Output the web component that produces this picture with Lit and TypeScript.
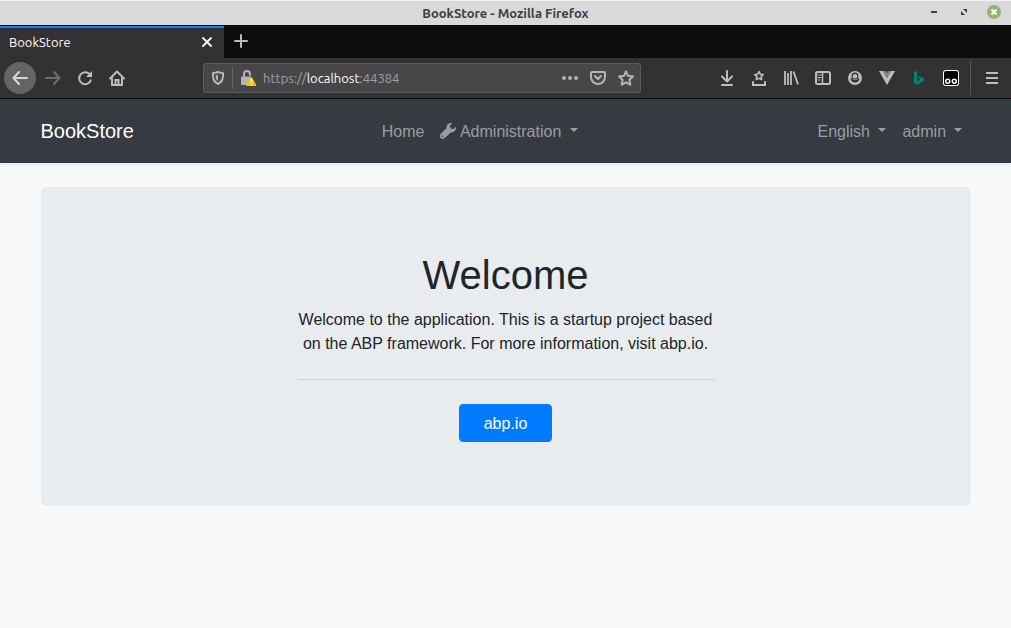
import { LitElement, html, css, svg } from "lit";
import { customElement } from "lit/decorators.js";

const icon = (body: unknown, size = 16) => html`<svg class="icon" width=${size} height=${size} viewBox="0 0 ${size} ${size}" fill="none" stroke="currentColor" stroke-width="2" stroke-linecap="round" stroke-linejoin="round" aria-hidden="true">${body}</svg>`;

const icons = {
  minimize: svg`<path d="M5 8h6" stroke-linecap="butt"/>`,
  restore: svg`<path d="M7 5h4v4zM5 7v4h4z" fill="currentColor" stroke="none"/>`,
  close: svg`<path d="M4 4l8 8M12 4l-8 8" stroke-width="1.800"/>`,
  closeWindow: svg`<circle cx="8" cy="8" r="7" fill="#92b372" stroke="none"/><path d="M5.500 5.500l5 5M10.500 5.500l-5 5" stroke-linecap="butt"/>`,
  plus: svg`<path d="M8 2v12M2 8h12"/>`,
  back: svg`<path d="M15 8H2M7 2L1.500 8L7 14"/>`,
  forward: svg`<path d="M1 8h13M9 2l5.500 6L9 14"/>`,
  reload: svg`<path d="M12.600 4.200A6 6 0 1 0 13.800 10.300"/><path d="M15 1v6H9z" fill="currentColor" stroke="none"/>`,
  home: svg`<path d="M1 8.500L8 1.500l7 7M3 8v7h10V8"/><path d="M6.500 15v-5h3v5" stroke-width="2" stroke-linejoin="miter"/>`,
  shield: svg`<path d="M8 2c2 1 4 1 5 1 .5 5-.5 9-5 11C3.500 12 2.500 8 3 3c1 0 3 0 5-1z"/><path d="M8 5v6C6 10 5.500 8 5.500 5.500z" fill="currentColor" stroke="none"/>`,
  lock: svg`<path d="M4 8V4a3 3 0 0 1 6 0v1"/><rect x="1" y="6.500" width="10" height="8.500" rx="1" fill="currentColor" stroke="none"/><path d="M11.500 7.500L16 15.500H7z" fill="#ffbf00" stroke="#ffbf00" stroke-width="1"/><path d="M11.500 9v3.500M11.500 13.700v1.300" stroke="#fff" stroke-width="1.600" stroke-linecap="butt"/>`,
  dots: svg`<g fill="currentColor" stroke="none"><circle cx="2" cy="8" r="2"/><circle cx="8" cy="8" r="2"/><circle cx="14" cy="8" r="2"/></g>`,
  pocket: svg`<path d="M2 2h12a1 1 0 0 1 1 1v4a7 7 0 0 1-14 0V3a1 1 0 0 1 1-1z"/><path d="M5 6l3 3 3-3"/>`,
  star: svg`<path d="M8 1.300l2 4.500 5 .6-3.600 3.400.9 4.900L8 12.300l-4.300 2.400.9-4.900L1 6.400l5-.6z"/>`,
  download: svg`<path d="M8 1v10M3 6.500l5 5 5-5M3 15h10"/>`,
  starTray: svg`<path d="M8 1.500l1.300 2.700 2.900.4-2.100 2 .6 3L8 8.200 5.300 9.600l.6-3-2.100-2 2.900-.4z" stroke-width="1.600"/><path d="M2 12v3h12v-3" stroke-linejoin="miter"/>`,
  library: svg`<path d="M2 1v14M5 3v12M8 1v14M10.500 1.500l4.500 13" stroke-width="1.800" stroke-linecap="butt"/>`,
  sidebar: svg`<rect x="1" y="2" width="14" height="12" rx="1.500"/><path d="M7.500 2v12" stroke-width="1.500"/><path d="M3 5h3M3 7.500h3M3 10h2" stroke-width="1"/>`,
  account: svg`<circle cx="8" cy="8" r="7" fill="currentColor" stroke="none"/><path d="M3.500 8.500C4 14 12 14 12.500 8.500L11 8.300a3.300 3.300 0 0 1-6 0z" fill="#323234" stroke="none"/><circle cx="8" cy="6" r="3.400" fill="#323234" stroke="none"/><circle cx="8" cy="6.300" r="2.300" fill="currentColor" stroke="none"/>`,
  vue: svg`<path d="M0 1h4l4 7 4-7h4L8 15z" fill="#bdbdbe" stroke="none"/><path d="M4 1h3l1 2 1-2h3L8 8z" fill="#858587" stroke="none"/>`,
  bing: svg`<path d="M3 1l3 1v9.500l3.500-2L8 8.700 7 6l6 2.200v2.800L6 15l-3-2z" fill="#008373" stroke="none"/>`,
  goggles: svg`<rect x="0" y="0" width="16" height="16" rx="3" fill="#fff" stroke="none"/><rect x="1" y="1" width="14" height="14" rx="2" fill="#000" stroke="none"/><g stroke="#fff" stroke-width="1.500"><circle cx="4.700" cy="11.300" r="2"/><circle cx="11.300" cy="11.300" r="2"/></g>`,
  menu: svg`<path d="M2 3h12M2 8h12M2 13h12" stroke-linecap="butt"/>`,
  wrench: svg`<path d="M15.800 3.800l-2.300 2.300-3-.6-.6-3L12.200.2C9 -.6 6.200 1.800 6.400 5.200L.8 10.800a2.600 2.600 0 0 0 3.900 4.300l6-5.700c3.500.6 6-2.500 5.100-5.600zM2.700 14a.8.8 0 1 1 0-1.500.8.8 0 0 1 0 1.500z" fill="currentColor" fill-rule="evenodd" stroke="none"/>`,
};

@customElement("browser-chrome")
class BrowserChrome extends LitElement {
  static styles = css`
    :host { display: block; font: 13px/20px Ubuntu, "Noto Sans", sans-serif; color: #f9f9fa; }
    * { box-sizing: border-box; }
    button { display: flex; align-items: center; justify-content: center; flex: none; padding: 0; border: 0; background: none; color: inherit; font: inherit; }
    .icon { display: block; flex: none; }
    .title-bar { display: grid; grid-template-columns: 1fr auto 1fr; align-items: center; height: 25px; background: #d9d9d9; border-top: 1px solid #f0f0f0; color: #404040; }
    .title { grid-column: 2; font-weight: 600; }
    .window-buttons { display: flex; justify-content: flex-end; gap: 14px; padding: 0 9px 2px 0; }
    .window-buttons button { width: 16px; height: 16px; }
    .window-buttons .close { color: #fff; }
    .tabs { display: flex; height: 33px; background: #0c0c0d; }
    .tab { display: flex; align-items: center; justify-content: space-between; width: 224px; padding: 0 9px 2px; background: #323234; border-top: 2px solid #0a84ff; margin-top: 1px; }
    .new-tab { width: 34px; padding-bottom: 1px; color: #b9b9ba; }
    .toolbar { display: flex; align-items: center; height: 41px; padding: 0 3px 0 4px; background: #323234; border-bottom: 1px solid #0c0c0d; color: #bdbdbe; }
    .tool { width: 32px; height: 32px; }
    .back { border-radius: 50%; background: #646465; color: #d8d8d9; margin-right: 1px; }
    .forward { color: #6d6d6e; }
    .spacer { flex: 70 1 0; }
    .address { display: flex; align-items: center; flex: 430 1 0; height: 30px; padding: 0 0 0 6px; background: #474749; border: 1px solid #5c5c5e; border-radius: 3px; color: #b4b4b5; }
    .address button { width: 28px; height: 28px; flex: none; }
    .address .security { width: 16px; }
    .address .site { width: 16px; }
    .divider { width: 1px; height: 22px; margin: 0 7px 0 6px; background: #66666c; }
    .url { flex: 1; min-width: 0; padding-left: 7px; color: #a1a1a3; white-space: nowrap; overflow: hidden; }
    .host { color: #f9f9fa; }
    .separator { width: 1px; height: 34px; margin: 0 5px 0 3px; background: #58585b; }
  `;

  tool(label: string, glyph: unknown, kind = "") {
    return html`<button class="tool ${kind}" aria-label=${label}>${icon(glyph)}</button>`;
  }

  render() {
    return html`
      <header class="title-bar">
        <span class="title">BookStore - Mozilla Firefox</span>
        <div class="window-buttons">
          <button aria-label="Minimize">${icon(icons.minimize)}</button>
          <button aria-label="Restore">${icon(icons.restore)}</button>
          <button class="close" aria-label="Close window">${icon(icons.closeWindow)}</button>
        </div>
      </header>
      <div class="tabs">
        <div class="tab"><span>BookStore</span><button aria-label="Close tab">${icon(icons.close)}</button></div>
        <button class="new-tab" aria-label="New tab">${icon(icons.plus)}</button>
      </div>
      <div class="toolbar">
        ${this.tool("Back", icons.back, "back")}
        ${this.tool("Forward", icons.forward, "forward")}
        ${this.tool("Reload", icons.reload)}
        ${this.tool("Home", icons.home)}
        <div class="spacer"></div>
        <div class="address">
          <button class="security" aria-label="Tracking protection">${icon(icons.shield)}</button>
          <span class="divider"></span>
          <button class="site" aria-label="Site information">${icon(icons.lock)}</button>
          <span class="url">https://<span class="host">localhost</span>:44384</span>
          <button aria-label="Page actions">${icon(icons.dots)}</button>
          <button aria-label="Save to Pocket">${icon(icons.pocket)}</button>
          <button aria-label="Bookmark this page">${icon(icons.star)}</button>
        </div>
        <div class="spacer"></div>
        ${this.tool("Downloads", icons.download)}
        ${this.tool("Bookmarks", icons.starTray)}
        ${this.tool("Library", icons.library)}
        ${this.tool("Sidebars", icons.sidebar)}
        ${this.tool("Account", icons.account)}
        ${this.tool("Vue devtools", icons.vue)}
        ${this.tool("Bing", icons.bing)}
        ${this.tool("Tampermonkey", icons.goggles)}
        <span class="separator"></span>
        ${this.tool("Menu", icons.menu)}
      </div>
    `;
  }
}

@customElement("app-root")
class AppRoot extends LitElement {
  static styles = css`
    :host { display: flex; flex-direction: column; min-height: 100vh; background: #f8f9fb; color: #212529; font: 16px/24px "Liberation Sans", Arial, sans-serif; }
    * { box-sizing: border-box; }
    a { text-decoration: none; color: inherit; }
    .container { width: 100%; max-width: 960px; margin: 0 auto; padding: 0 15px; }
    .navbar { background: #363a41; box-shadow: 0 2px 4px rgba(0, 0, 0, 0.08); padding: 12px 0; }
    .bar { display: flex; align-items: center; }
    .brand { margin-right: 16px; color: #fff; font-size: 20px; line-height: 40px; }
    .nav { display: flex; color: #9b9da0; }
    .main-nav { margin: 0 auto; }
    .link { display: block; padding: 9px 8px 7px; border: 0; background: none; color: inherit; font: inherit; white-space: nowrap; }
    .icon { display: inline-block; vertical-align: -2px; }
    .caret::after { content: ""; display: inline-block; margin-left: 4px; vertical-align: 5px; border: 4px solid transparent; border-top-color: currentColor; border-bottom: 0; }
    .page { padding-top: 24px; }
    .jumbotron { padding: 64px 32px; border-radius: 5px; background: #e8ecee; text-align: center; }
    .intro { max-width: 418px; margin: 0 auto; }
    .heading { margin: 0 0 9px; font-size: 40px; line-height: 48px; font-weight: 400; }
    .lead { margin: 0; }
    .rule { margin: 23px 0 24px; border: 0; border-top: 1px solid #d0d3d5; }
    .action { display: inline-block; vertical-align: top; padding: 7px 24px 5px; border: 1px solid #007bff; border-radius: 4px; background: #007bff; color: #fff; }
  `;

  render() {
    return html`
      <browser-chrome></browser-chrome>
      <nav class="navbar">
        <div class="container bar">
          <a class="brand" href="#">BookStore</a>
          <div class="nav main-nav">
            <a class="link" href="#">Home</a>
            <button class="link caret">${icon(icons.wrench)} Administration </button>
          </div>
          <div class="nav">
            <button class="link caret">English </button>
            <button class="link caret">admin </button>
          </div>
        </div>
      </nav>
      <main class="container page">
        <section class="jumbotron">
          <div class="intro">
            <h1 class="heading">Welcome</h1>
            <p class="lead">Welcome to the application. This is a startup project based on the ABP framework. For more information, visit abp.io.</p>
            <hr class="rule">
            <a class="action" href="#">abp.io</a>
          </div>
        </section>
      </main>
    `;
  }
}
